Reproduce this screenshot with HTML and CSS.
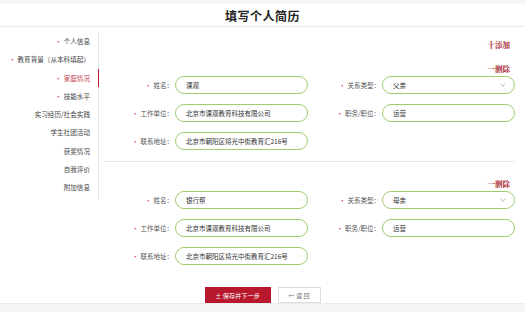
FILE: index.html
```html
<!DOCTYPE html>
<html lang="zh-CN">
<head>
  <meta charset="UTF-8" />
  <title>填写个人简历</title>
  <link rel="stylesheet" href="styles.css">
</head>
<body>
  <div class="page-head">
    <h1 class="page-title">填写个人简历</h1>
  </div>

  <div class="main">
    <div class="side-nav">
      <div class="nav-item req">个人信息</div>
      <div class="nav-item req">教育背景（从本科填起）</div>
      <div class="nav-item req active">家庭情况</div>
      <div class="nav-item req">技能水平</div>
      <div class="nav-item">实习经历/社会实践</div>
      <div class="nav-item">学生社团活动</div>
      <div class="nav-item">获奖情况</div>
      <div class="nav-item">自我评价</div>
      <div class="nav-item">附加信息</div>
    </div>

    <div class="content">
      <div class="top-actions">
        <a class="link-add">十添加</a>
      </div>

      <div class="member">
        <div class="member-actions"><a class="link-del">一删除</a></div>
        <div class="form-grid">
          <label class="field-label">姓名：</label>
          <div class="field-input">课观</div>
          <label class="field-label">关系类型：</label>
          <div class="field-input select">父亲</div>

          <label class="field-label">工作单位：</label>
          <div class="field-input">北京市课观教育科技有限公司</div>
          <label class="field-label">职务/职位：</label>
          <div class="field-input">运营</div>

          <label class="field-label">联系地址：</label>
          <div class="field-input">北京市朝阳区将光中街教育汇216号</div>
        </div>
      </div>

      <div class="member">
        <div class="member-actions"><a class="link-del">一删除</a></div>
        <div class="form-grid">
          <label class="field-label">姓名：</label>
          <div class="field-input">银行帮</div>
          <label class="field-label">关系类型：</label>
          <div class="field-input select">母亲</div>

          <label class="field-label">工作单位：</label>
          <div class="field-input">北京市课观教育科技有限公司</div>
          <label class="field-label">职务/职位：</label>
          <div class="field-input">运营</div>

          <label class="field-label">联系地址：</label>
          <div class="field-input">北京市朝阳区将光中街教育汇216号</div>
        </div>
      </div>
    </div>
  </div>

  <div class="form-buttons">
    <button class="btn-save">± 保存并下一步</button>
    <button class="btn-back">← 返 回</button>
  </div>

  <div class="page-foot"></div>
</body>
</html>
```

FILE: styles.css
```css
html, body {
  margin: 0;
  padding: 0;
}

body {
  width: 525px;
  height: 312px;
  overflow: hidden;
  background: #fff;
  font-family: "Noto Sans CJK SC", "Noto Sans", sans-serif;
  color: #555;
}

.page-head {
  height: 27px;
  border-top: 4px solid #f4f6f8;
  border-bottom: 1px dotted #d8d8d8;
  box-sizing: border-box;
  display: flex;
  align-items: center;
  justify-content: center;
}

.page-title {
  margin: 0;
  font-size: 12px;
  font-weight: bold;
  color: #222;
  letter-spacing: 0.5px;
}

.main {
  display: flex;
  align-items: flex-start;
}

.side-nav {
  width: 98px;
  margin-top: 5px;
  border-right: 1px solid #e2e2e2;
  padding-bottom: 3px;
}

.nav-item {
  height: 18.3px;
  line-height: 18.3px;
  font-size: 6.6px;
  color: #444;
  text-align: right;
  padding-right: 8px;
  white-space: nowrap;
  position: relative;
}

.nav-item.req::before {
  content: "•";
  color: #c23a4a;
  margin-right: 2px;
}

.nav-item.active {
  color: #c23a4a;
}

.nav-item.active::after {
  content: "";
  position: absolute;
  right: -1px;
  top: 0;
  width: 1.5px;
  height: 100%;
  background: #b51f2f;
}

.content {
  flex: 1;
  padding: 0 10px 0 6px;
}

.top-actions,
.member-actions {
  text-align: right;
  height: 12px;
  line-height: 12px;
  padding-right: 5px;
}

.top-actions {
  margin-top: 8px;
}

.member-actions {
  margin-top: 12px;
  margin-bottom: 5px;
}

.link-add,
.link-del {
  font-family: "Noto Serif CJK SC", "Noto Sans CJK SC", serif;
  font-size: 7.5px;
  font-weight: bold;
  color: #a8202c;
}

.member {
  padding-bottom: 11px;
}

.member + .member {
  border-top: 1px solid #e6e6e6;
  padding-bottom: 0;
}

.form-grid {
  display: grid;
  grid-template-columns: 70px 133px 74px 133px;
  grid-auto-rows: 18px;
  row-gap: 10px;
  align-items: center;
}

.field-label {
  font-size: 6.5px;
  color: #555;
  text-align: right;
  padding-right: 2px;
}

.field-label::before {
  content: "•";
  color: #c23a4a;
  margin-right: 2px;
}

.field-input {
  height: 18px;
  box-sizing: border-box;
  border: 1px solid #9fcd6f;
  border-radius: 9px;
  padding-left: 10px;
  font-size: 6.5px;
  line-height: 16px;
  color: #333;
  position: relative;
}

.field-input.select::after {
  content: "";
  position: absolute;
  right: 9px;
  top: 5px;
  width: 3px;
  height: 3px;
  border-right: 1px solid #ccc;
  border-bottom: 1px solid #ccc;
  transform: rotate(45deg);
}

.form-buttons {
  display: flex;
  justify-content: center;
  gap: 7px;
  margin-top: 22px;
}

.form-buttons button {
  height: 16px;
  font-family: "Noto Sans CJK SC", sans-serif;
  font-size: 6.2px;
  padding: 0;
  cursor: pointer;
}

.btn-save {
  width: 66px;
  background: #b8182b;
  border: none;
  color: #fff;
}

.btn-back {
  width: 43px;
  background: #fff;
  border: 1px solid #ddd;
  color: #777;
}

.page-foot {
  height: 12px;
  background: #f4f5f7;
  border-top: 1px solid #ececec;
}
```
